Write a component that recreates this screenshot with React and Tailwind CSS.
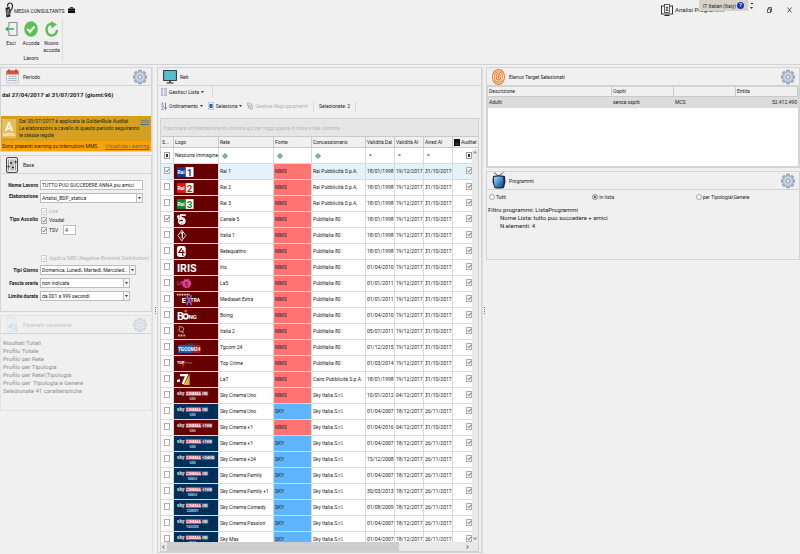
import { useState } from "react";

const MMS = "MMS";
const SKY = "SKY";

const networks = [
  { logo: "rai1", name: "Rai 1", source: MMS, owner: "Rai Pubblicità S.p.A.", from: "18/01/1998", to: "19/12/2017", aired: "31/10/2017", picked: true },
  { logo: "rai2", name: "Rai 2", source: MMS, owner: "Rai Pubblicità S.p.A.", from: "18/01/1998", to: "19/12/2017", aired: "31/10/2017" },
  { logo: "rai3", name: "Rai 3", source: MMS, owner: "Rai Pubblicità S.p.A.", from: "18/01/1998", to: "19/12/2017", aired: "31/10/2017" },
  { logo: "canale5", name: "Canale 5", source: MMS, owner: "Publitalia 80", from: "18/01/1998", to: "19/12/2017", aired: "31/10/2017", picked: true },
  { logo: "italia1", name: "Italia 1", source: MMS, owner: "Publitalia 80", from: "18/01/1998", to: "19/12/2017", aired: "31/10/2017" },
  { logo: "rete4", name: "Retequattro", source: MMS, owner: "Publitalia 80", from: "18/01/1998", to: "19/12/2017", aired: "31/10/2017" },
  { logo: "iris", name: "Iris", source: MMS, owner: "Publitalia 80", from: "01/04/2010", to: "19/12/2017", aired: "31/10/2017" },
  { logo: "la5", name: "La5", source: MMS, owner: "Publitalia 80", from: "01/01/2011", to: "19/12/2017", aired: "31/10/2017" },
  { logo: "extra", name: "Mediaset Extra", source: MMS, owner: "Publitalia 80", from: "01/01/2011", to: "19/12/2017", aired: "31/10/2017" },
  { logo: "boing", name: "Boing", source: MMS, owner: "Publitalia 80", from: "01/04/2010", to: "19/12/2017", aired: "31/10/2017" },
  { logo: "italia2", name: "Italia 2", source: MMS, owner: "Publitalia 80", from: "05/07/2011", to: "19/12/2017", aired: "31/10/2017" },
  { logo: "tgcom", name: "Tgcom 24", source: MMS, owner: "Publitalia 80", from: "01/12/2015", to: "19/12/2017", aired: "31/10/2017" },
  { logo: "topcrime", name: "Top Crime", source: MMS, owner: "Publitalia 80", from: "01/03/2014", to: "19/12/2017", aired: "31/10/2017" },
  { logo: "la7", name: "La7", source: MMS, owner: "Cairo Pubblicità S.p.A.", from: "18/01/1998", to: "19/12/2017", aired: "31/10/2017" },
  { logo: "sky", tag: "HD", sub: "UNO", name: "Sky Cinema Uno", source: MMS, owner: "Sky Italia S.r.l.", from: "10/01/2012", to: "04/12/2017", aired: "31/10/2017" },
  { logo: "sky", tag: "HD", sub: "UNO", name: "Sky Cinema Uno", source: SKY, owner: "Sky Italia S.r.l.", from: "01/04/2007", to: "18/12/2017", aired: "26/11/2017" },
  { logo: "sky", tag: "+1HD", sub: "UNO", name: "Sky Cinema +1", source: MMS, owner: "Sky Italia S.r.l.", from: "01/04/2016", to: "04/12/2017", aired: "31/10/2017" },
  { logo: "sky", tag: "+1HD", sub: "UNO", name: "Sky Cinema +1", source: SKY, owner: "Sky Italia S.r.l.", from: "01/04/2007", to: "18/12/2017", aired: "26/11/2017" },
  { logo: "sky", tag: "+24HD", sub: "UNO", name: "Sky Cinema +24", source: SKY, owner: "Sky Italia S.r.l.", from: "15/12/2008", to: "18/12/2017", aired: "26/11/2017" },
  { logo: "sky", tag: "HD", sub: "FAMILY", name: "Sky Cinema Family", source: SKY, owner: "Sky Italia S.r.l.", from: "01/04/2007", to: "18/12/2017", aired: "26/11/2017" },
  { logo: "sky", tag: "+1HD", sub: "FAMILY", name: "Sky Cinema Family +1", source: SKY, owner: "Sky Italia S.r.l.", from: "30/03/2013", to: "18/12/2017", aired: "26/11/2017" },
  { logo: "sky", tag: "HD", sub: "COMEDY", name: "Sky Cinema Comedy", source: SKY, owner: "Sky Italia S.r.l.", from: "01/08/2009", to: "18/12/2017", aired: "26/11/2017" },
  { logo: "sky", tag: "HD", sub: "PASSION", name: "Sky Cinema Passion", source: SKY, owner: "Sky Italia S.r.l.", from: "01/04/2007", to: "18/12/2017", aired: "26/11/2017" },
  { logo: "sky", tag: "HD", sub: "MAX", name: "Sky Max", source: SKY, owner: "Sky Italia S.r.l.", from: "01/04/2007", to: "18/12/2017", aired: "26/11/2017" },
];

const evaluation = [
  "Risultati Totali",
  "Profilo Totale",
  "Profilo per Rete",
  "Profilo per Tipologia",
  "Profilo per Rete\\Tipologia",
  "Profilo per  Tipologia e Genere",
  "Selezionate 41 caratteristiche",
];

/* ---------- icons ---------- */

function Gear({ faded }) {
  return (
    <svg viewBox="0 0 28 32" className={`h-[16px] w-[14px] ${faded ? "opacity-35" : ""}`}>
      {[0, 45, 90, 135].map((a) => (
        <path key={a} d="M11.500 2h5l1 6v16l-1 6h-5l-1-6V8z" fill="#a3b2c5" stroke="#73849c" transform={`rotate(${a} 14 16)`} />
      ))}
      <circle cx="14" cy="16" r="10" fill="#bccad9" />
      <circle cx="14" cy="16" r="7" fill="#d3dce7" />
      <circle cx="14" cy="16" r="4" fill="#f0f0f0" stroke="#6b7d95" strokeWidth="1.5" />
    </svg>
  );
}

function CalendarIcon() {
  return (
    <svg viewBox="0 0 26 30" className="h-[15px] w-[13px]">
      <rect x="1" y="3" width="24" height="25" rx="2" fill="#eef3fa" stroke="#8a9bb5" />
      <path d="M1 5a2 2 0 0 1 2-2h20a2 2 0 0 1 2 2v6H1z" fill="#e0503c" />
      <path d="M6 0v6M20 0v6" stroke="#8a3b33" strokeWidth="2" />
      <path d="M5 15h4M11 15h4M17 15h4M5 19h4M11 19h4M17 19h4M5 23h4M11 23h4" stroke="#8fa5c6" strokeWidth="2.4" />
      <path d="M17 23h4" stroke="#e58a5a" strokeWidth="2.4" />
    </svg>
  );
}

function SlidersIcon() {
  return (
    <svg viewBox="0 0 24 32" className="h-[16px] w-[12px]">
      <rect x="1" y="1" width="22" height="30" rx="3" fill="#ececec" stroke="#444" strokeWidth="2" />
      <path d="M5 5v22M10 5v22M14 5v22M19 5v22" stroke="#555" strokeWidth="1.2" />
      <path d="M3 19h4M8 12h4M12 21h4M17 10h4" stroke="#222" strokeWidth="3.4" />
    </svg>
  );
}

function ParamsIcon() {
  return (
    <svg viewBox="0 0 24 30" className="h-[15px] w-[12px] opacity-35">
      <path d="M2 1h14l6 6v22H2z" fill="#e7eef7" stroke="#9fb0c8" />
      <path d="M6 22v-6M10 22v-9M14 22v-5" stroke="#9fb0c8" strokeWidth="2.4" />
      <circle cx="15" cy="19" r="5" fill="#d5e2f2" stroke="#8ba0bd" strokeWidth="1.6" />
      <path d="m19 23 4 5" stroke="#8ba0bd" strokeWidth="2.4" />
    </svg>
  );
}

function MonitorIcon() {
  return (
    <svg viewBox="0 0 28 28" className="h-[14px] w-[14px]">
      <rect x="1" y="1" width="26" height="20" rx="1" fill="#58bccd" stroke="#3a4248" strokeWidth="2.4" />
      <path d="M12 21h4v4h-4z" fill="#3a4248" />
      <path d="M7 26h14" stroke="#3a4248" strokeWidth="2.4" />
    </svg>
  );
}

function TargetIcon() {
  return (
    <svg viewBox="0 0 26 32" className="h-[16px] w-[13px]">
      <ellipse cx="13" cy="16" rx="13" ry="16" fill="#f07a2a" />
      <ellipse cx="13" cy="16" rx="10" ry="12.5" fill="none" stroke="#fff" strokeWidth="1.8" />
      <ellipse cx="13" cy="16" rx="6.5" ry="8.2" fill="none" stroke="#fff" strokeWidth="1.8" />
      <ellipse cx="13" cy="16" rx="3" ry="4" fill="none" stroke="#fff" strokeWidth="1.6" />
    </svg>
  );
}

function TvIcon() {
  return (
    <svg viewBox="0 0 28 34" className="h-[17px] w-[14px]">
      <defs>
        <linearGradient id="tvScreen" x1="0" y1="0" x2="1" y2="1">
          <stop offset="0" stopColor="#b9dcf8" />
          <stop offset="0.5" stopColor="#4b8fd0" />
          <stop offset="1" stopColor="#123f86" />
        </linearGradient>
      </defs>
      <path d="M4 1l9 7 10-7" fill="none" stroke="#555" strokeWidth="1.8" />
      <path d="M2 8q12-3 24 0l1 12-3 12q-10 2-19 0L1 20z" fill="#1d2b44" />
      <path d="M4 10q9-2 18 0l1 10-2 10q-8 1-15 0L4 20z" fill="url(#tvScreen)" />
    </svg>
  );
}

function AddIcon() {
  return (
    <svg viewBox="0 0 12 12" className="block h-[6px] w-[6px]">
      <path d="M6 0l6 6-6 6-6-6z" fill="#5f9f80" />
      <path d="M6 3l3 3-3 3-3-3z" fill="#d6eadf" />
      <path d="M4 6h4M6 4v4" stroke="#3f7f60" />
    </svg>
  );
}

function Caret() {
  return (
    <svg viewBox="0 0 6 4" className="h-[2px] w-[3px]">
      <path d="M0 0h6L3 4z" fill="#333" />
    </svg>
  );
}

/* ---------- channel logos, drawn on a 45x15 cell ---------- */

function RaiLogo({ n, color }) {
  return (
    <>
      <rect x="3" y="3" width="9" height="10" fill={color} />
      <text x="3.5" y="10" fontSize="5" fontWeight="700" fill="#fff">Rai</text>
      <rect x="12" y="3" width="8" height="10" fill="#fff" />
      <text x="13" y="12" fontSize="10" fontWeight="700" fill={color}>{n}</text>
    </>
  );
}

function SkyLogo({ tag, sub }) {
  const tagWidth = { HD: 6, "+1HD": 10, "+24HD": 13 }[tag];
  return (
    <>
      <text x="3" y="7" fontSize="5" fontWeight="700" fill="#e8e8e8">sky</text>
      <rect x="12" y="3" width="16" height="5" fill="#d8435a" />
      <text x="12.5" y="7" fontSize="4" fontWeight="700" fill="#fff">CINEMA</text>
      <rect x="29" y="3" width={tagWidth} height="5" fill="#b9a9b4" opacity="0.4" />
      <text x="29" y="7" fontSize="4" fontWeight="700" fill="#fff">{tag}</text>
      <text x="19" y="12" fontSize="3" fontWeight="700" textAnchor="middle" fill="#cfc8d0">{sub}</text>
    </>
  );
}

const logos = {
  rai1: <RaiLogo n="1" color="#0b3f9e" />,
  rai2: <RaiLogo n="2" color="#d21f1c" />,
  rai3: <RaiLogo n="3" color="#128a2c" />,
  canale5: (
    <>
      <path d="M3 4q2-2 3 0l-1 4q-2-1-2-4z" fill="#fff" />
      <path d="M12 3H7v4q3-1 3 1.5T6 10" fill="none" stroke="#fff" strokeWidth="1.8" />
      <circle cx="8" cy="9" r="3.2" fill="none" stroke="#fff" strokeWidth="1.4" />
    </>
  ),
  italia1: (
    <>
      <path d="M8 2l4 5.5L8 13 4 7.500z" fill="none" stroke="#e8dada" strokeWidth="1" />
      <path d="M7 5.5l1.500-1v6" fill="none" stroke="#fff" strokeWidth="1.2" />
    </>
  ),
  rete4: (
    <>
      <rect x="3" y="2" width="9" height="11" rx="2.5" fill="#fff" />
      <path d="M8 4L5 8.500h6M9 6v6" fill="none" stroke="#660000" strokeWidth="1.2" />
    </>
  ),
  iris: <text x="3" y="12" fontSize="11" fontWeight="700" fill="#fff">IRIS</text>,
  la5: (
    <>
      <text x="3" y="9" fontSize="5" fontWeight="700" fill="#c23a86">LA</text>
      <circle cx="13" cy="7.5" r="4" fill="#e0429a" stroke="#e0429a" strokeWidth="1.6" strokeDasharray="2 1.1" />
      <text x="11" y="10" fontSize="6" fontWeight="700" fill="#5e0a32">5</text>
    </>
  ),
  extra: (
    <>
      <path d="M3 2.500h13" stroke="#e6d4d4" strokeWidth="2" strokeDasharray="1.2 0.5" />
      <text x="8" y="11" fontSize="8" fontWeight="700" fill="#fff">E</text>
      <path d="M13 4l5 9" stroke="#c44dc0" strokeWidth="1.8" />
      <path d="M18 3l-5 10" stroke="#5a7bea" strokeWidth="1.5" />
      <text x="17" y="10" fontSize="5" fontWeight="700" fill="#fff">TRA</text>
    </>
  ),
  boing: (
    <>
      <text x="3" y="12" fontSize="11" fontWeight="700" fill="#fff">B</text>
      <circle cx="12" cy="8.5" r="2.3" fill="none" stroke="#fff" strokeWidth="1.8" />
      <circle cx="12" cy="3" r="1.5" fill="#ff3b2f" />
      <text x="15" y="11" fontSize="6" fontWeight="700" fill="#fff">NG</text>
    </>
  ),
  italia2: (
    <>
      <path d="M6 2l4 2-1 4-4-1zM8 8l2 1" fill="none" stroke="#d9bcbc" strokeWidth="0.8" />
      <path d="M4 11.500h8" stroke="#e0c8c8" strokeWidth="2" strokeDasharray="1 0.6" />
    </>
  ),
  tgcom: (
    <>
      <path d="M12 3h12v3H12z" fill="#3b2b47" />
      <rect x="4" y="5" width="16" height="8" fill="#1f5fae" />
      <rect x="20" y="5" width="7" height="8" fill="#c0161c" />
      <text x="4" y="11" fontSize="5" fontWeight="700" fill="#fff">TGCOM24</text>
    </>
  ),
  topcrime: (
    <>
      <path d="M8 5h3l-2 8z" fill="#e02a2a" />
      <text x="3" y="8" fontSize="4" fontWeight="700" fill="#fff">TOP</text>
      <text x="11" y="8" fontSize="3" fill="#c08080">crime</text>
    </>
  ),
  la7: (
    <>
      <path d="M10 13l6-11v11z" fill="#e8b427" />
      <path d="M3 8l3-1v3H3z" fill="#fff" />
      <path d="M6 3h7l-4 9" fill="none" stroke="#fff" strokeWidth="2.4" />
    </>
  ),
};

function ChannelLogo({ row }) {
  return (
    <svg viewBox="0 0 45 15" preserveAspectRatio="xMinYMid meet" className="block h-[15px] w-full">
      {row.logo === "sky" ? <SkyLogo tag={row.tag} sub={row.sub} /> : logos[row.logo]}
    </svg>
  );
}

/* ---------- small controls ---------- */

function Check({ checked, disabled, label, hideLabel }) {
  return (
    <label className={`inline-flex items-center gap-[2px] ${disabled ? "text-[#b4b4b4]" : ""}`}>
      <span className="relative block h-[7px] w-[6px]">
        <input
          type="checkbox"
          defaultChecked={checked}
          disabled={disabled}
          aria-label={hideLabel ? label : undefined}
          className="peer block h-[7px] w-[6px] appearance-none border border-[#adadad] bg-white disabled:border-[#d0d0d0]"
        />
        <svg viewBox="0 0 12 14" className="pointer-events-none absolute inset-0 hidden h-[7px] w-[6px] peer-checked:block">
          <path d="M3 7l2.500 3L9.500 4" fill="none" stroke={disabled ? "#b4b4b4" : "#444"} strokeWidth="1.5" />
        </svg>
      </span>
      {!hideLabel && label}
    </label>
  );
}

function FilterSquare({ label }) {
  return (
    <button type="button" aria-label={label} className="flex h-[7px] w-[6px] items-center justify-center border border-[#9c9c9c] bg-white">
      <span className="h-[3px] w-[2px] bg-[#333]" />
    </button>
  );
}

function Combo({ id, options, className = "" }) {
  return (
    <div className={`relative ${className}`}>
      <select id={id} className="block h-[10px] w-full appearance-none border border-[#bdbdbd] bg-white pl-[1px] pr-[7px] text-[5px] leading-[8px]">
        {options.map((o) => (
          <option key={o}>{o}</option>
        ))}
      </select>
      <span className="pointer-events-none absolute inset-y-0 right-0 flex w-[7px] items-center justify-center border border-[#bdbdbd] bg-[#f4f4f4]">
        <Caret />
      </span>
    </div>
  );
}

function PanelTitle({ icon, title, gear, faded }) {
  return (
    <header className="flex h-[18px] items-center border-b border-[#d2d2d2] pl-[5px] pr-[4px]">
      <span className="flex w-[17px]">{icon}</span>
      <h2 className={`flex-1 text-[5px] ${faded ? "text-[#c4c4c4]" : ""}`}>{title}</h2>
      {gear && (
        <button type="button" aria-label={`Impostazioni ${title}`} disabled={faded}>
          <Gear faded={faded} />
        </button>
      )}
    </header>
  );
}

function Panel({ children, className = "" }) {
  return <section className={`border border-[#d4d4d4] ${className}`}>{children}</section>;
}

/* ---------- top ---------- */

function TitleBar() {
  return (
    <div className="flex h-[19px] items-center pl-[5px] pr-[8px]">
      <svg viewBox="0 0 18 32" className="h-[16px] w-[9px]">
        <path d="M5 9q0-7 5-7t5 7q0 5-4 8" fill="none" stroke="#222" strokeWidth="2.4" />
        <path d="M1 12l8-3 2 20-8 2z" fill="#222" />
        <path d="M8 14q5 0 3 8" fill="none" stroke="#222" strokeWidth="1.6" />
        <path d="M4 15l1 11M7 14l1 12" stroke="#eee" strokeWidth="1.2" />
      </svg>
      <h1 className="w-[54px] pt-[3px] text-[5px]">MEDIA CONSULTANTS</h1>
      <svg viewBox="0 0 14 12" className="h-[6px] w-[7px]">
        <path d="M4.500 3V1h5v2" fill="none" stroke="#000" strokeWidth="1.5" />
        <rect y="3" width="14" height="9" rx="1" fill="#000" />
        <path d="M0 7h14" stroke="#888" strokeWidth="0.8" />
      </svg>

      <div className="ml-auto mr-[10px] flex w-[96px] items-center gap-[2px]">
        <svg viewBox="0 0 24 24" className="h-[12px] w-[12px] shrink-0">
          <rect x="1" y="4" width="22" height="16" fill="#f4f4f4" stroke="#222" strokeWidth="1.8" />
          <rect x="7" y="1" width="10" height="16" fill="#fff" stroke="#222" strokeWidth="1.4" />
          <path d="M9 7h6M9 10h6M9 13h6M12 4v10" stroke="#222" strokeWidth="1.2" />
          <path d="M7 23h10" stroke="#222" strokeWidth="2" />
        </svg>
        <span className="whitespace-nowrap text-[6px]">Analisi Programmi</span>
      </div>
      <div className="flex items-center gap-[15px]">
        <button type="button" aria-label="Ripristina">
          <svg viewBox="0 0 10 12" className="block h-[6px] w-[5px]">
            <path d="M1 4h6v7H1zM3 4V1h6v8H7" fill="none" stroke="#222" strokeWidth="1.4" />
          </svg>
        </button>
        <button type="button" aria-label="Chiudi">
          <svg viewBox="0 0 10 12" className="block h-[6px] w-[5px]">
            <path d="M1 1l8 10M9 1L1 11" stroke="#222" strokeWidth="1.5" />
          </svg>
        </button>
      </div>

      {/* language bar floats over the window title */}
      <div className="absolute right-[45px] top-0 flex h-[11px] w-[56px] items-center bg-[#d6d2ca] pl-[4px] text-[5px]">
        <span className="flex-1 whitespace-nowrap">IT Italian (Italy)</span>
        <button type="button" aria-label="Guida" className="mr-[4px] flex h-[7px] w-[7px] items-center justify-center rounded-full bg-[#1637b8] font-bold leading-[7px] text-white">?</button>
        <span className="flex h-full w-[7px] flex-col items-center justify-center gap-[3px] bg-[#f0eeea]">
          <span className="h-[1px] w-[2px] bg-[#222]" />
          <Caret />
        </span>
      </div>
    </div>
  );
}

function Ribbon() {
  return (
    <div className="flex h-[46px] border-b border-[#d2d2d2] pb-[2px]">
      <div className="flex w-[63px] flex-col border-r border-[#dcdcdc]">
        <div className="flex flex-1 items-start gap-[1px] pl-[1px] pt-[2px] text-center text-[5px] leading-[7px]">
          <button type="button" className="flex w-[20px] flex-col items-center gap-[3px]">
            <svg viewBox="0 0 26 32" className="h-[16px] w-[13px]">
              <path d="M8 10V3h16v26H8v-7" fill="none" stroke="#8a8f8c" strokeWidth="2.2" />
              <path d="M18 16H3M8 11l-6 5 6 5" fill="none" stroke="#35ad6b" strokeWidth="2.6" />
            </svg>
            Esci
          </button>
          <button type="button" className="flex w-[18px] flex-col items-center gap-[3px]">
            <svg viewBox="0 0 28 32" className="h-[16px] w-[14px]">
              <ellipse cx="14" cy="16" rx="13.5" ry="15.5" fill="#5cc054" />
              <path d="M7 16l5 6 9-11" fill="none" stroke="#fff" strokeWidth="4" />
            </svg>
            Accoda
          </button>
          <button type="button" className="flex w-[21px] flex-col items-center gap-[3px]">
            <svg viewBox="0 0 26 32" className="h-[16px] w-[13px]">
              <path d="M16 6Q3 5 3 17q1 12 11 12 9-1 10-11" fill="none" stroke="#5cc054" strokeWidth="5" />
              <path d="M12 0l12 7-11 8z" fill="#5cc054" />
            </svg>
            Nuovo accoda
          </button>
        </div>
        <span className="text-center text-[5px]">Lavoro</span>
      </div>
    </div>
  );
}

/* ---------- left column ---------- */

function PeriodPanel() {
  return (
    <Panel>
      <PanelTitle icon={<CalendarIcon />} title="Periodo" gear />
      <p className="mb-[17px] mt-[4px] whitespace-nowrap pl-[1px] text-[6px] font-bold leading-[9px]">dal 27/04/2017 al 31/07/2017 (giorni:96)</p>
      <div className="flex h-[25px] bg-[#d6a01e] pr-[2px]">
        <div className="my-[3px] ml-[1px] flex w-[14px] shrink-0 flex-col items-center justify-end bg-[#e3bd62] text-[#fff6dc]">
          <span className="text-[12px] font-bold leading-[12px]">A</span>
          <span className="text-[3px] font-bold leading-[5px]">AUDITEL</span>
        </div>
        <p className="flex-1 whitespace-pre pl-[3px] pt-[2px] text-[5px] leading-[7px]">
          {"Dal 30/07/2017 è applicata la GoldenRule Auditel\nLe elaborazioni a cavallo di questo periodo seguiranno\nle stesse regole"}
        </p>
        <a href="#info" className="pt-[2px] text-[5px] leading-[7px] text-[#3d6f9a] underline">Info</a>
      </div>
      <div className="flex h-[10px] items-center justify-between whitespace-nowrap bg-[#ffa200] pl-[1px] pr-[2px] text-[5px]">
        <span>Sono presenti warning su interruzioni MMS</span>
        <a href="#warning" className="text-[#3d6f9a] underline">Visualizza i warning</a>
      </div>
    </Panel>
  );
}

function BasePanel() {
  const label = "whitespace-nowrap pr-[2px] text-right font-bold";
  return (
    <Panel>
      <PanelTitle icon={<SlidersIcon />} title="Base" />
      <form className="grid grid-cols-[39px_minmax(0,1fr)] items-center pb-[10px] pr-[8px] pt-[6px] text-[5px] leading-[9px]">
        <label htmlFor="nome" className={label}>Nome Lavoro</label>
        <input id="nome" defaultValue="TUTTO PUO SUCCEDERE ANNA piu amici" className="h-[10px] min-w-0 border border-[#bdbdbd] bg-white pl-[1px]" />
        <label htmlFor="elab" className={label}>Elaborazione</label>
        <Combo id="elab" options={["Analisi_BDP_statica"]} className="mt-[3px]" />

        <span className={label}>Tipo Ascolto</span>
        <fieldset className="flex flex-col items-start pl-[1px] pt-[4px]">
          <Check label="Live" checked disabled />
          <Check label="Vosdal" checked />
          <div className="flex items-center gap-[5px]">
            <Check label="TSV" checked />
            <input aria-label="Giorni TSV" defaultValue="4" className="h-[10px] w-[13px] border border-[#bdbdbd] bg-white pl-[1px]" />
          </div>
        </fieldset>

        <div className="col-start-2 mt-[19px] whitespace-nowrap pl-[1px]">
          <Check label="Applica NBD (Negative Binomial Distribution)" checked disabled />
        </div>

        <label htmlFor="giorno" className={label}>Tipi Giorno</label>
        <Combo id="giorno" options={["Domenica, Lunedì, Martedì, Mercoled..."]} className="w-[96px]" />
        <label htmlFor="fascia" className={label}>Fascia oraria</label>
        <Combo id="fascia" options={["non indicata"]} className="my-[3px] w-[90px]" />
        <label htmlFor="durata" className={label}>Limite durata</label>
        <Combo id="durata" options={["da 001 a 999 secondi"]} className="w-[90px]" />
      </form>
    </Panel>
  );
}

function ParamsPanel() {
  return (
    <Panel className="border-[#e2e2e2] pb-[15px]">
      <PanelTitle icon={<ParamsIcon />} title="Parametri valutazione" gear faded />
      <ul className="pl-[2px] pt-[5px] text-[6px] text-[#8f8f8f]">
        {evaluation.map((line) => (
          <li key={line} className="whitespace-pre">{line}</li>
        ))}
      </ul>
    </Panel>
  );
}

function Grip() {
  return (
    <div className="flex flex-col items-center justify-center gap-[1px] border-l border-[#dedede]">
      {[0, 1, 2, 3].map((i) => (
        <span key={i} className="size-[1px] bg-[#777]" />
      ))}
    </div>
  );
}

/* ---------- networks ---------- */

function NetworkToolbar() {
  return (
    <div className="flex flex-col gap-[1px] pb-[4px] pl-[3px] text-[5px]">
      <div className="flex h-[12px] items-center">
        <button type="button" className="flex items-center gap-[2px] pr-[8px]">
          <svg viewBox="0 0 12 16" className="h-[8px] w-[6px]">
            <rect x="0.5" y="0.5" width="11" height="15" fill="#f5f8ff" stroke="#8494c4" />
            <path d="M2 4h2M2 12h2" stroke="#d0563e" strokeWidth="2.4" />
            <path d="M2 8h2M6 4h4M6 8h4M6 12h4" stroke="#5c77b8" strokeWidth="1.4" />
          </svg>
          Gestisci Lista <Caret />
        </button>
        <span className="h-full w-px bg-[#d8d8d8]" />
      </div>
      <div className="flex h-[14px] items-center gap-[5px]">
        <button type="button" className="flex items-center gap-[2px]">
          <svg viewBox="0 0 12 16" className="h-[8px] w-[6px]">
            <path d="M1 7l2-6 2 6M1 9h4l-4 6h4" fill="none" stroke="#8a4fae" strokeWidth="1.2" />
            <path d="M9 1v13M7 11l2 4 2-4" fill="none" stroke="#3c5ca8" strokeWidth="1.4" />
          </svg>
          Ordinamento <Caret />
        </button>
        <button type="button" className="flex items-center gap-[2px]">
          <svg viewBox="0 0 12 16" className="h-[8px] w-[6px]">
            <rect x="1" y="1" width="10" height="14" fill="none" stroke="#5b7fb5" strokeDasharray="2 1.5" />
            <rect x="3" y="4" width="6" height="8" fill="#2c62ae" />
          </svg>
          Seleziona <Caret />
        </button>
        <button type="button" disabled className="flex items-center gap-[2px] text-[#b4b4b4]">
          <svg viewBox="0 0 12 16" className="h-[8px] w-[6px]">
            <path d="M1 2h5v5H1zM6 9h5v5H6zM3 7v5h3M6 4h4v5" fill="none" stroke="#a8a8a8" strokeWidth="1.5" />
          </svg>
          Gestore Ragruppamenti
        </button>
        <span className="h-[11px] w-px bg-[#d8d8d8]" />
        <span>Selezionate: 2</span>
        <span className="h-[11px] w-px bg-[#d8d8d8]" />
      </div>
    </div>
  );
}

function NetworkTable() {
  const [active, setActive] = useState(0);
  const th = "border-b border-r border-[#c9c9c9] pl-[1px] text-left font-normal whitespace-nowrap";
  const td = "border-b border-r border-[#dadada] p-0 whitespace-nowrap";

  return (
    <div className="relative min-h-0 flex-1 overflow-hidden">
      <table className="w-full table-fixed border-separate border-spacing-0 bg-white text-[5px] leading-[7px]">
        <colgroup>
          <col className="w-[13px]" />
          <col className="w-[45px]" />
          <col className="w-[55px]" />
          <col className="w-[38px]" />
          <col className="w-[54px]" />
          <col className="w-[29px]" />
          <col className="w-[29px]" />
          <col className="w-[29px]" />
          <col className="w-[26px]" />
        </colgroup>
        <thead>
          <tr className="h-[11px] bg-[#f0f0f0]">
            <th className={th}>S...</th>
            <th className={th}>Logo</th>
            <th className={th}>Rete</th>
            <th className={th}>Fonte</th>
            <th className={th}>Concessionario</th>
            <th className={th}>Validità Dal</th>
            <th className={th}>Validità Al</th>
            <th className={th}>Aired Al</th>
            <th className={th}>
              <span className="flex items-center gap-[1px]">
                <svg viewBox="0 0 12 14" className="h-[7px] w-[6px] shrink-0">
                  <rect width="12" height="14" fill="#111" />
                  <path d="M3 10h6" stroke="#888" strokeWidth="1.2" />
                </svg>
                Auditel
              </span>
            </th>
          </tr>
          <tr className="h-[16px]">
            <td className={`${td} pl-[3px]`}><FilterSquare label="Filtra selezione" /></td>
            <td className={`${td} pl-[1px]`}>Nessuna Immagine</td>
            <td className={`${td} pl-[3px]`}><AddIcon /></td>
            <td className={`${td} pl-[3px]`}><AddIcon /></td>
            <td className={`${td} pl-[3px]`}><AddIcon /></td>
            <td className={`${td} pl-[3px]`}>=</td>
            <td className={`${td} pl-[3px]`}>=</td>
            <td className={`${td} pl-[3px]`}>=</td>
            <td className={`${td} pl-[13px]`}><FilterSquare label="Filtra Auditel" /></td>
          </tr>
        </thead>
        <tbody>
          {networks.map((row, i) => (
            <tr
              key={i}
              onClick={() => setActive(i)}
              className={`h-[16px] ${i === active ? "bg-[#e4f2fa]" : ""}`}
            >
              <td className={`${td} pl-[3px]`}><Check label={row.name} hideLabel checked={row.picked} /></td>
              <td className={`${td} ${row.source === MMS ? "bg-[#660000]" : "bg-[#00305a]"}`}>
                <ChannelLogo row={row} />
              </td>
              <td className={`${td} pl-[1px]`}>{row.name}</td>
              <td className={`${td} pl-[1px] ${row.source === MMS ? "bg-[#ff7373]" : "bg-[#5fb4ff]"}`}>{row.source}</td>
              <td className={`${td} pl-[1px]`}>{row.owner}</td>
              <td className={`${td} pl-[1px]`}>{row.from}</td>
              <td className={`${td} pl-[1px]`}>{row.to}</td>
              <td className={`${td} pl-[1px]`}>{row.aired}</td>
              <td className={`${td} pl-[13px]`}><Check label={`Auditel ${row.name}`} hideLabel checked /></td>
            </tr>
          ))}
        </tbody>
      </table>

      {/* vertical scroll bar over the last column */}
      <div className="absolute bottom-0 right-0 top-[12px] flex w-[6px] flex-col items-center justify-between bg-[#e9e9e9] py-[2px]">
        <svg viewBox="0 0 8 6" className="h-[3px] w-[4px]"><path d="M1 5l3-4 3 4" fill="none" stroke="#444" strokeWidth="1.5" /></svg>
        <svg viewBox="0 0 8 6" className="h-[3px] w-[4px]"><path d="M1 1l3 4 3-4" fill="none" stroke="#444" strokeWidth="1.5" /></svg>
      </div>
    </div>
  );
}

function NetworksPanel() {
  return (
    <Panel className="flex min-h-0 flex-col">
      <PanelTitle icon={<MonitorIcon />} title="Reti" />
      <NetworkToolbar />
      <div className="mx-[2px] mt-[1px] flex min-h-0 flex-1 flex-col border border-[#cfcfcf]">
        <div className="flex h-[18px] items-center border-b border-[#c9c9c9] bg-[#e6e6e6] pl-[2px] text-[5px] text-[#b8b8b8]">
          Trascinare un'intestazione di colonna qui per raggruppare in base a tale colonna.
        </div>
        <NetworkTable />
        <div className="flex h-[9px] items-center bg-[#e9e9e9] px-[1px]">
          <svg viewBox="0 0 6 8" className="h-[4px] w-[3px]"><path d="M5 1L1 4l4 3" fill="none" stroke="#444" strokeWidth="1.5" /></svg>
          <div className="mx-[2px] flex-1 self-stretch">
            <div className="h-full w-[78%] bg-[#cdcdcd]" />
          </div>
          <svg viewBox="0 0 6 8" className="mr-[8px] h-[4px] w-[3px]"><path d="M1 1l4 3-4 3" fill="none" stroke="#444" strokeWidth="1.5" /></svg>
        </div>
      </div>
    </Panel>
  );
}

/* ---------- right column ---------- */

function TargetsPanel() {
  const th = "border-b border-r border-[#c9c9c9] pl-[1px] text-left font-normal";
  return (
    <Panel className="flex h-[101px] flex-col">
      <PanelTitle icon={<TargetIcon />} title="Elenco Target Selezionati" gear />
      <div className="flex-1 border border-[#d4d4d4] bg-white">
        <table className="w-full table-fixed border-separate border-spacing-0 text-[5px] leading-[7px]">
          <colgroup>
            <col className="w-[40%]" />
            <col className="w-[20%]" />
            <col className="w-[20%]" />
            <col className="w-[20%]" />
          </colgroup>
          <thead>
            <tr className="h-[10px] bg-[#f0f0f0]">
              <th className={th}>Descrizione</th>
              <th className={th}>Ospiti</th>
              <th className={th}></th>
              <th className={th}>Entita</th>
            </tr>
          </thead>
          <tbody>
            <tr className="h-[11px] bg-[#dcdcdc]">
              <td className="pl-[1px]">Adulti</td>
              <td className="pl-[1px]">senza ospiti</td>
              <td className="pl-[1px]">MCS</td>
              <td className="pr-[1px] text-right">52.412.490</td>
            </tr>
          </tbody>
        </table>
      </div>
    </Panel>
  );
}

function ProgramsPanel() {
  const [mode, setMode] = useState("in lista");
  return (
    <Panel className="h-[89px]">
      <PanelTitle icon={<TvIcon />} title="Programmi" gear />
      <fieldset className="grid grid-cols-3 pl-[2px] pt-[2px] text-[5px]">
        {["Tutti", "in lista", "per Tipologia\\Genere"].map((m) => (
          <label key={m} className="flex h-[9px] items-center gap-[1px]">
            <input
              type="radio"
              name="programmi"
              checked={mode === m}
              onChange={() => setMode(m)}
              className="size-[6px] appearance-none rounded-full border border-[#a5a5a5] bg-white checked:bg-[#333] checked:shadow-[inset_0_0_0_1px_white]"
            />
            {m}
          </label>
        ))}
      </fieldset>
      <div className="pl-[1px] pt-[5px] text-[6px]">
        <p>Filtro programmi: ListaProgrammi</p>
        <p className="pl-[12px]">Nome Lista: tutto puo succedere + amici</p>
        <p className="pl-[12px]">N.elementi: 4</p>
      </div>
    </Panel>
  );
}

export default function App() {
  return (
    <div className="relative flex h-screen flex-col overflow-hidden bg-[#f0f0f0] font-['Roboto','Liberation_Sans',sans-serif] leading-[8px] text-[#222]">
      <TitleBar />
      <Ribbon />
      <main className="grid min-h-0 flex-1 grid-cols-[152px_5px_minmax(0,325fr)_4px_minmax(0,314fr)] pb-[1px] pt-[2px]">
        <aside className="flex flex-col gap-[3px]">
          <PeriodPanel />
          <BasePanel />
          <ParamsPanel />
        </aside>
        <Grip />
        <NetworksPanel />
        <Grip />
        <div className="flex flex-col gap-[3px]">
          <TargetsPanel />
          <ProgramsPanel />
        </div>
      </main>
    </div>
  );
}
